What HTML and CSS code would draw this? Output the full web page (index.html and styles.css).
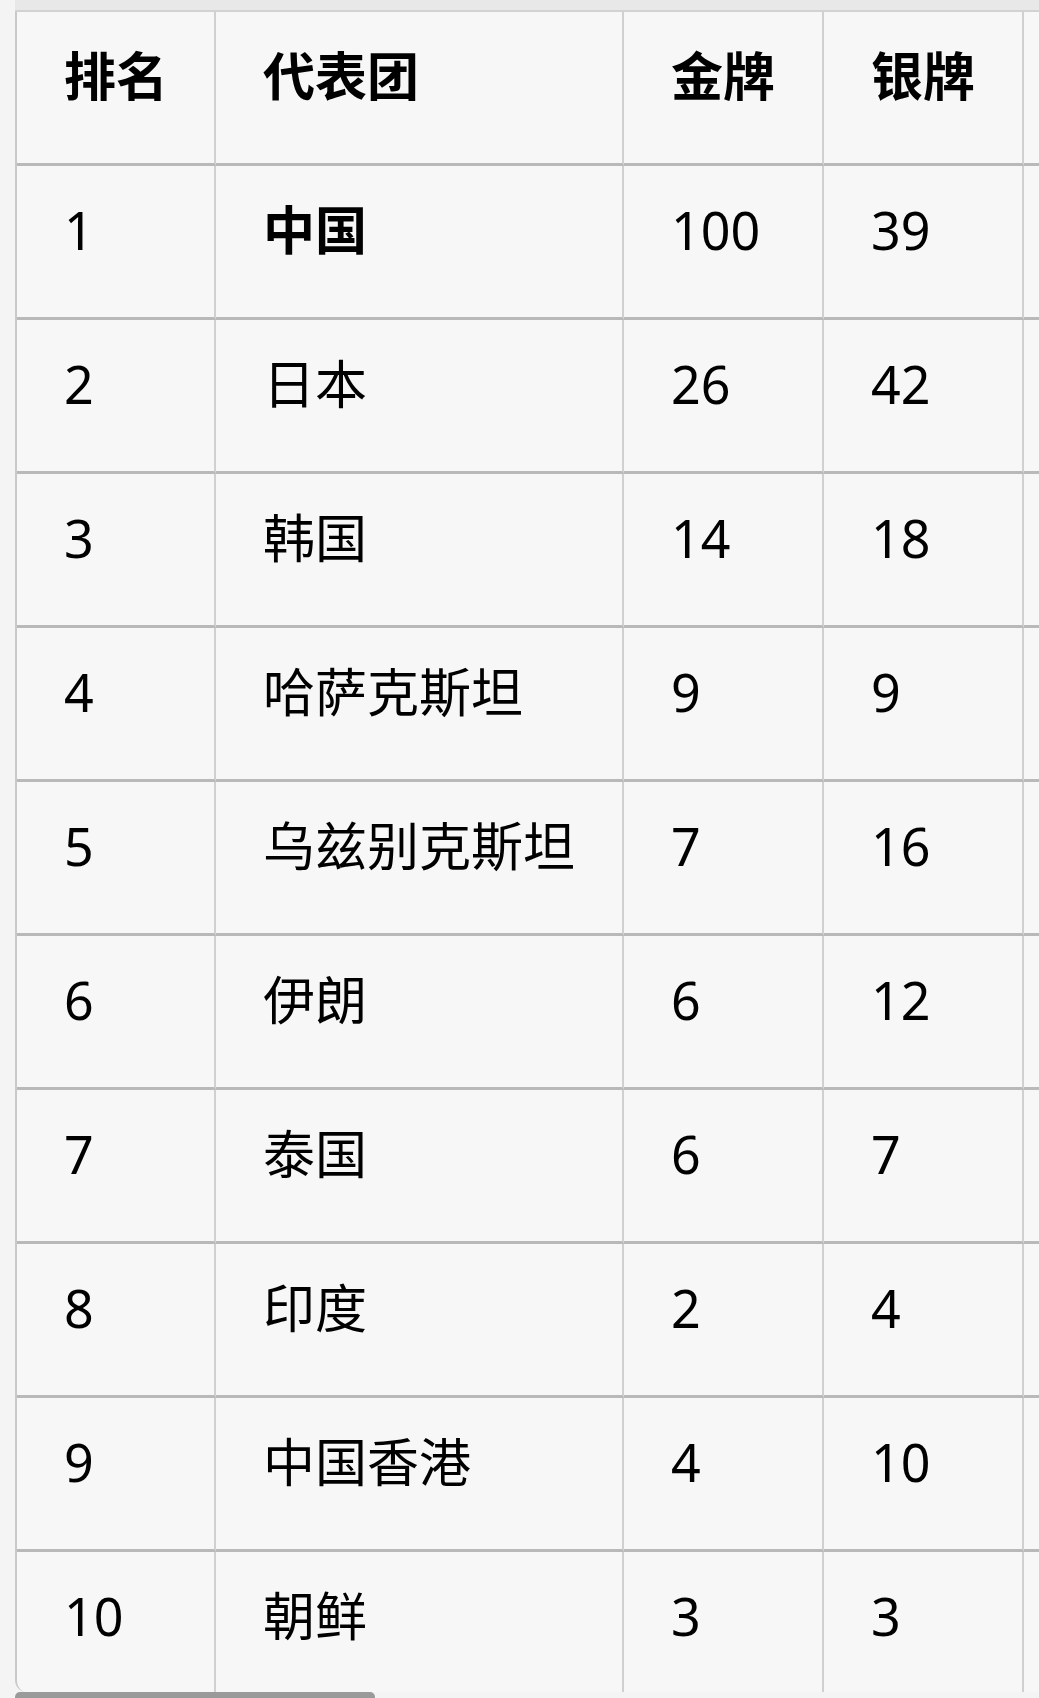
FILE: index.html
```html
<!DOCTYPE html>
<html lang="zh-CN">
<head>
<meta charset="utf-8">
<title>奖牌榜</title>
<link rel="stylesheet" href="styles.css">
</head>
<body>
<div class="frame">
  <div class="band"></div>
  <div class="table-wrap">
    <table class="medals">
      <colgroup>
        <col class="c-rank">
        <col class="c-team">
        <col class="c-num">
        <col class="c-num">
        <col class="c-num">
      </colgroup>
      <thead>
        <tr><th>排名</th><th>代表团</th><th>金牌</th><th>银牌</th><th></th></tr>
      </thead>
      <tbody>
        <tr><td>1</td><td class="strong">中国</td><td>100</td><td>39</td><td></td></tr>
        <tr><td>2</td><td>日本</td><td>26</td><td>42</td><td></td></tr>
        <tr><td>3</td><td>韩国</td><td>14</td><td>18</td><td></td></tr>
        <tr><td>4</td><td>哈萨克斯坦</td><td>9</td><td>9</td><td></td></tr>
        <tr><td>5</td><td>乌兹别克斯坦</td><td>7</td><td>16</td><td></td></tr>
        <tr><td>6</td><td>伊朗</td><td>6</td><td>12</td><td></td></tr>
        <tr><td>7</td><td>泰国</td><td>6</td><td>7</td><td></td></tr>
        <tr><td>8</td><td>印度</td><td>2</td><td>4</td><td></td></tr>
        <tr><td>9</td><td>中国香港</td><td>4</td><td>10</td><td></td></tr>
        <tr class="last"><td>10</td><td>朝鲜</td><td>3</td><td>3</td><td></td></tr>
      </tbody>
    </table>
  </div>
  <div class="scrollbar"><div class="thumb"></div></div>
</div>
</body>
</html>
```

FILE: styles.css
```css
html, body {
  margin: 0;
  padding: 0;
  background: #f4f4f4;
}
body {
  font-family: "Noto Sans", "Noto Sans CJK SC", sans-serif;
  color: #000;
  overflow: hidden;
}
.frame {
  margin-left: 15px;
}
.band {
  height: 10px;
  background: #e8e8e8;
  border-bottom: 2px solid #d2d2d2;
}
.table-wrap {
  border-left: 2px solid #c9c9c9;
  border-bottom-left-radius: 12px;
  overflow: hidden;
  background: #f7f7f7;
}
.medals {
  border-collapse: separate;
  border-spacing: 0;
  table-layout: fixed;
  width: 1207px;
  background: #f7f7f7;
}
.c-rank { width: 199px; }
.c-team { width: 408px; }
.c-num { width: 200px; }
.medals th,
.medals td {
  box-sizing: border-box;
  height: 154px;
  padding: 25px 0 0 47px;
  vertical-align: top;
  text-align: left;
  font-size: 52px;
  line-height: 78px;
  white-space: nowrap;
  border-right: 2px solid #d0d0d0;
  border-bottom: 3px solid #b9b9b9;
}
.medals th {
  font-weight: 700;
}
.medals td {
  font-weight: 400;
}
.medals td.strong {
  font-weight: 700;
}
.medals tr.last td {
  height: 140px;
  border-bottom: none;
}
.scrollbar {
  height: 6px;
}
.thumb {
  width: 360px;
  height: 6px;
  background: #9a9a9a;
  border-radius: 5px 5px 0 0;
}
```
